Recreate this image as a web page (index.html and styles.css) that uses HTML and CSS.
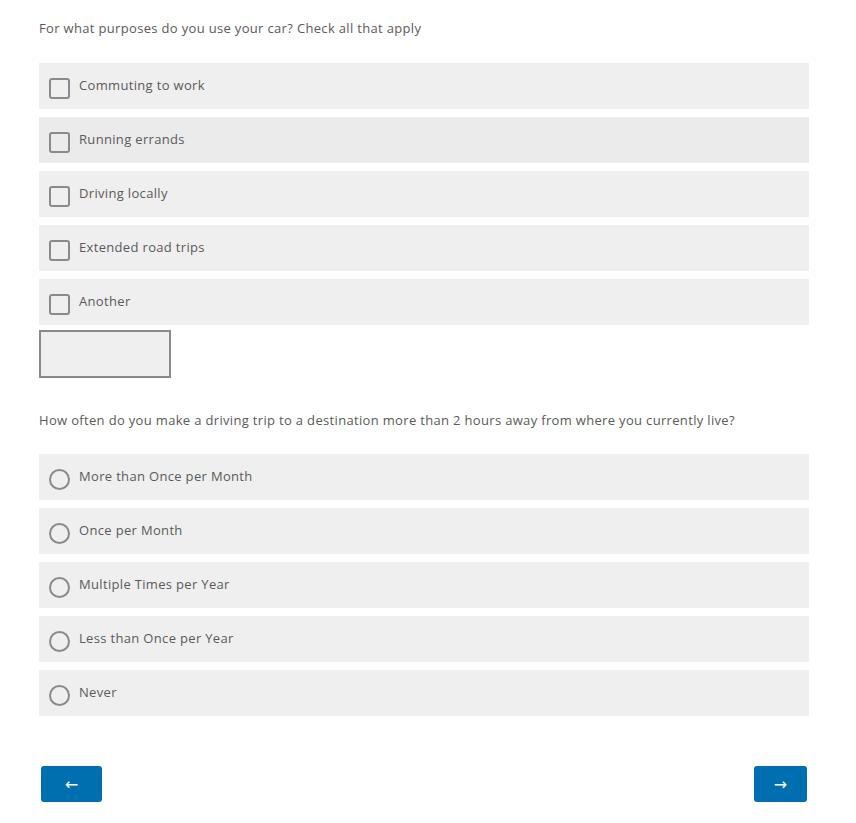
FILE: index.html
```html
<!DOCTYPE html>
<html>
<head>
<meta charset="utf-8">
<link rel="stylesheet" href="styles.css">
</head>
<body>
<div class="survey">
  <div class="question">
    <p class="q-title">For what purposes do you use your car? Check all that apply</p>
    <div class="options">
      <label class="option"><span class="box"></span><span class="label">Commuting to work</span></label>
      <label class="option hover"><span class="box"></span><span class="label">Running errands</span></label>
      <label class="option"><span class="box"></span><span class="label">Driving locally</span></label>
      <label class="option"><span class="box"></span><span class="label">Extended road trips</span></label>
      <label class="option"><span class="box"></span><span class="label">Another</span></label>
    </div>
    <div class="other-input"></div>
  </div>
  <div class="question q2">
    <p class="q-title">How often do you make a driving trip to a destination more than 2 hours away from where you currently live?</p>
    <div class="options">
      <label class="option"><span class="radio"></span><span class="label">More than Once per Month</span></label>
      <label class="option"><span class="radio"></span><span class="label">Once per Month</span></label>
      <label class="option"><span class="radio"></span><span class="label">Multiple Times per Year</span></label>
      <label class="option"><span class="radio"></span><span class="label">Less than Once per Year</span></label>
      <label class="option"><span class="radio"></span><span class="label">Never</span></label>
    </div>
  </div>
  <div class="nav">
    <button class="btn prev">&larr;</button>
    <button class="btn next">&rarr;</button>
  </div>
</div>
</body>
</html>
```
FILE: styles.css
```css
html, body {
  margin: 0;
  padding: 0;
  background: #ffffff;
}
body {
  font-family: "Open Sans", "Noto Sans", sans-serif;
  color: #5a5a5a;
  font-size: 13px;
  letter-spacing: 0.33px;
}
.survey {
  padding: 18px 47px 0 39px;
}
.q-title {
  margin: 0;
  line-height: 20px;
  font-size: 13px;
  color: #5a5a5a;
}
.options {
  margin-top: 25px;
  display: flex;
  flex-direction: column;
  gap: 8px;
}
.q2 .options {
  margin-top: 24px;
}
.option {
  display: flex;
  align-items: center;
  height: 46px;
  background: #efefef;
  padding-left: 10px;
  box-sizing: border-box;
}
.option.hover {
  background: #ebebeb;
}
.box {
  width: 17px;
  height: 17px;
  border: 2px solid #8a8a8a;
  border-radius: 3px;
  margin-top: 4px;
  flex: none;
}
.radio {
  width: 17px;
  height: 17px;
  border: 2px solid #8a8a8a;
  border-radius: 50%;
  margin-top: 4px;
  flex: none;
}
.label {
  margin-left: 9px;
  margin-top: -2px;
  color: #5a5a5a;
}
.other-input {
  margin-top: 5px;
  width: 128px;
  height: 44px;
  border: 2px solid #8a8a8a;
  background: #efefef;
}
.q2 {
  margin-top: 32px;
}
.nav {
  margin-top: 50px;
  display: flex;
  justify-content: space-between;
  padding-left: 2px;
  padding-right: 2px;
}
.btn {
  height: 36px;
  background: #006fb0;
  color: #fff;
  border: none;
  border-radius: 3px;
  font-size: 16px;
  font-family: "DejaVu Sans", sans-serif;
  letter-spacing: 0;
  cursor: pointer;
}
.prev { width: 61px; }
.next { width: 53px; }
```
